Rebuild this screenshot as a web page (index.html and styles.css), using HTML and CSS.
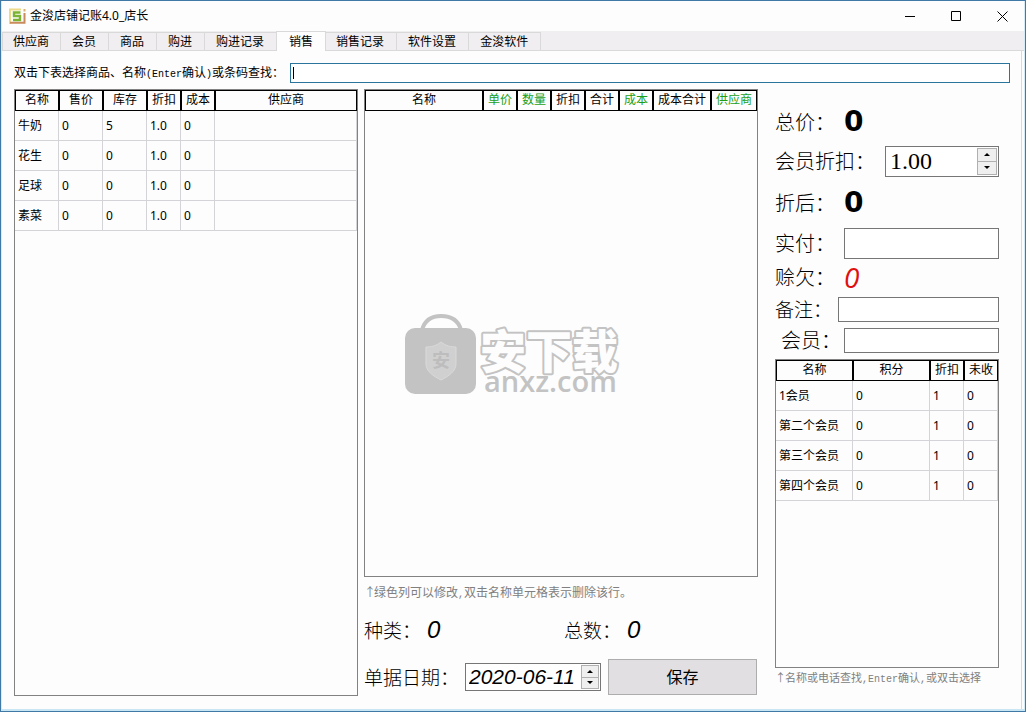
FILE: index.html
```html
<!DOCTYPE html>
<html lang="zh-CN">
<head>
<meta charset="utf-8">
<title>金浚店铺记账4.0_店长</title>
<link rel="stylesheet" href="styles.css">
</head>
<body>
<div class="window">
  <header class="titlebar">
    <svg class="app-icon" viewBox="0 0 17 17" aria-hidden="true">
      <path d="M1 16V1.5h11" fill="none" stroke="#ecd98a" stroke-width="2"/>
      <path d="M1 14.8h14.5V5" fill="none" stroke="#c98a5c" stroke-width="2"/>
      <path d="M15.500 1v2.500" stroke="#d9b070" stroke-width="2"/>
      <path d="M11.500 4.500H5v3.500h6v4H4" fill="none" stroke="#7cb332" stroke-width="2.400"/>
    </svg>
    <h1 class="title">金浚店铺记账4.0_店长</h1>
    <div class="window-buttons">
      <button type="button" aria-label="最小化"><svg viewBox="0 0 11 11"><path d="M0 5.500h10"/></svg></button>
      <button type="button" aria-label="最大化"><svg viewBox="0 0 11 11"><path d="M.5.5h9v9h-9z"/></svg></button>
      <button type="button" aria-label="关闭"><svg viewBox="0 0 11 11"><path d="M.5.5l10 10M10.500.5l-10 10"/></svg></button>
    </div>
  </header>

  <nav class="tabs">
    <button type="button" class="tab">供应商</button>
    <button type="button" class="tab">会员</button>
    <button type="button" class="tab">商品</button>
    <button type="button" class="tab">购进</button>
    <button type="button" class="tab">购进记录</button>
    <button type="button" class="tab tab-active">销售</button>
    <button type="button" class="tab">销售记录</button>
    <button type="button" class="tab">软件设置</button>
    <button type="button" class="tab">金浚软件</button>
  </nav>

  <main class="pane">
    <div class="search">
      <label for="search">双击下表选择商品、名称<span class="latin">(Enter</span>确认<span class="latin">)</span>或条码查找：</label>
      <div class="search-box"><input id="search" type="text"></div>
    </div>

    <div class="columns">
      <section class="grid-box">
        <table>
          <colgroup><col class="w44"><col class="w44"><col class="w44"><col class="w34"><col class="w34"><col></colgroup>
          <thead><tr><th>名称</th><th>售价</th><th>库存</th><th>折扣</th><th>成本</th><th>供应商</th></tr></thead>
          <tbody>
            <tr><td>牛奶</td><td>0</td><td>5</td><td>1.0</td><td>0</td><td></td></tr>
            <tr><td>花生</td><td>0</td><td>0</td><td>1.0</td><td>0</td><td></td></tr>
            <tr><td>足球</td><td>0</td><td>0</td><td>1.0</td><td>0</td><td></td></tr>
            <tr><td>素菜</td><td>0</td><td>0</td><td>1.0</td><td>0</td><td></td></tr>
          </tbody>
        </table>
      </section>

      <section class="order">
        <div class="grid-box">
          <table>
            <colgroup><col><col class="w34"><col class="w34"><col class="w34"><col class="w34"><col class="w34"><col class="w58"><col class="w46"></colgroup>
            <thead><tr><th>名称</th><th class="editable">单价</th><th class="editable">数量</th><th>折扣</th><th>合计</th><th class="editable">成本</th><th>成本合计</th><th class="editable">供应商</th></tr></thead>
          </table>
          <svg class="watermark" viewBox="0 0 220 92" aria-hidden="true">
            <path d="M17 16C20 5 27 2 36 2s17 3 20 14" fill="none" stroke="#c3c3c3" stroke-width="4"/>
            <rect x="0" y="14" width="71" height="66" rx="10" fill="#c3c3c3"/>
            <path d="M36 28c5 4 10 5 15 5v17c0 7-7 12-15 16-8-4-15-9-15-16V33c5 0 10-1 15-5z" fill="#d0d0d0" stroke="#dadada"/>
            <text class="mark-seal" x="36" y="53" text-anchor="middle">安</text>
            <text class="mark-name" x="75" y="54">安下载</text>
            <text class="mark-site" x="79" y="78">anxz.com</text>
          </svg>
        </div>
        <p class="note"><span class="arrow">↑</span>绿色列可以修改<span class="latin">,</span>双击名称单元格表示删除该行。</p>
        <div class="counts">
          <div>种类：<output>0</output></div>
          <div>总数：<output>0</output></div>
        </div>
        <div class="submit">
          <label for="date">单据日期：</label>
          <div class="spin spin-date">
            <input id="date" type="text" value="2020-06-11">
            <div class="steps">
              <button type="button" class="up" aria-label="增加"></button>
              <button type="button" class="down" aria-label="减少"></button>
            </div>
          </div>
          <button type="button" class="save">保存</button>
        </div>
      </section>

      <section class="checkout">
        <div class="row row-total"><span>总价：</span><output class="sum">0</output></div>
        <div class="row row-field">
          <label for="discount">会员折扣：</label>
          <div class="spin spin-discount">
            <input id="discount" type="text" value="1.00">
            <div class="steps">
              <button type="button" class="up" aria-label="增加"></button>
              <button type="button" class="down" aria-label="减少"></button>
            </div>
          </div>
        </div>
        <div class="row row-net"><span>折后：</span><output class="sum">0</output></div>
        <div class="row row-field"><label for="paid">实付：</label><input id="paid" class="field field-tall" type="text"></div>
        <div class="row row-debt"><span>赊欠：</span><output class="debt">0</output></div>
        <div class="row row-remark"><label for="remark">备注：</label><input id="remark" class="field" type="text"></div>
        <div class="row row-member"><label for="member">会员：</label><input id="member" class="field" type="text"></div>
        <div class="grid-box">
          <table>
            <colgroup><col><col><col class="w34"><col class="w34"></colgroup>
            <thead><tr><th>名称</th><th>积分</th><th>折扣</th><th>未收</th></tr></thead>
            <tbody>
              <tr><td>1会员</td><td>0</td><td>1</td><td>0</td></tr>
              <tr><td>第二个会员</td><td>0</td><td>1</td><td>0</td></tr>
              <tr><td>第三个会员</td><td>0</td><td>1</td><td>0</td></tr>
              <tr><td>第四个会员</td><td>0</td><td>1</td><td>0</td></tr>
            </tbody>
          </table>
        </div>
        <p class="note note-small"><span class="arrow">↑</span>名称或电话查找<span class="latin">,Enter</span>确认<span class="latin">,</span>或双击选择</p>
      </section>
    </div>
  </main>
</div>
</body>
</html>
```
FILE: styles.css
```css
* { box-sizing: border-box; }

body {
  margin: 0;
  font: 12px/16px "Noto Sans", "Noto Sans CJK SC", sans-serif;
  color: #000;
}

button, input { font: inherit; color: inherit; margin: 0; }
p, h1 { margin: 0; }

.window {
  display: flex;
  flex-direction: column;
  min-height: 100vh;
  background: #fdfdfd;
  border: 1px solid #4179a6;
  box-shadow: inset 0 -2px #c9e6f5, inset 1px 0 #d5ecf7, inset -1px 0 #d5ecf7;
}

/* Title bar */
.titlebar {
  display: flex;
  align-items: center;
  height: 30px;
  padding-left: 8px;
}
.app-icon { width: 17px; height: 17px; margin-right: 4px; }
.title { flex: 1; font-size: 12px; font-weight: 400; }
.window-buttons { display: flex; }
.window-buttons button {
  width: 46px;
  height: 30px;
  padding: 0;
  border: 0;
  background: none;
}
.window-buttons svg {
  display: block;
  width: 11px;
  height: 11px;
  margin: 0 auto;
  fill: none;
  stroke: #000;
}

/* Tabs */
.tabs {
  display: flex;
  align-items: flex-end;
  height: 20px;
  margin: 0 1px;
  background: #f0eef1;
  border-bottom: 1px solid #d9d9d9;
}
.tab {
  height: 18px;
  padding: 1px 12px 0 11px;
  border: 1px solid #d9d9d9;
  border-width: 1px 1px 0 0;
  background: #f0eef1;
  line-height: 16px;
  white-space: nowrap;
}
.tab:first-child { padding: 1px 11px 0 10px; border-left-width: 1px; }
.tab-active {
  position: relative;
  height: 20px;
  padding: 0 12px;
  margin: 0 -1px -1px;
  border-left-width: 1px;
  background: #fdfdfd;
}

/* Page body */
.pane {
  flex: 1;
  display: flex;
  flex-direction: column;
  margin: 0 3px 2px 2px;
  padding: 12px 11px 13px 11px;
  border-right: 1px solid #d9d9d9;
}
.search { display: flex; align-items: center; gap: 6px; }
.search label { white-space: nowrap; }
.latin { font: 10px/12px "Liberation Mono", monospace; }
.search-box { position: relative; flex: 1; display: flex; }
.search-box::after {
  content: "";
  position: absolute;
  left: 3px;
  top: 4px;
  width: 1px;
  height: 12px;
  background: #000;
}
.search-box input {
  width: 100%;
  height: 20px;
  padding: 0 3px;
  border: 1px solid #2b749b;
  background: #fff;
  outline: 0;
}

.columns {
  flex: 1;
  display: grid;
  grid-template-columns: minmax(0, 344fr) minmax(0, 394fr) minmax(0, 235fr);
  gap: 6px;
  margin: 6px 11px 0 0;
}

/* Tables */
.grid-box {
  position: relative;
  border: 1px solid #828282;
  background: #fdfdfd;
}
table {
  width: 100%;
  table-layout: fixed;
  border-collapse: separate;
  border-spacing: 0;
}
.w34 { width: 34px; }
.w44 { width: 44px; }
.w46 { width: 46px; }
.w58 { width: 58px; }
th {
  height: 21px;
  padding: 0 0 1px;
  border: 1px solid #000;
  font-weight: 400;
  white-space: nowrap;
}
td {
  height: 30px;
  padding: 0 0 0 3px;
  border: 1px solid #d4d4d8;
  border-width: 0 1px 1px 0;
  white-space: nowrap;
}
.editable { color: #18a018; }

/* Order column */
.order { display: flex; flex-direction: column; }
.order .grid-box { flex: 1; }
.watermark {
  position: absolute;
  left: 40px;
  top: 224px;
  width: 220px;
  height: 92px;
}
.mark-seal { font: 700 18px "Noto Sans CJK SC", sans-serif; fill: #bdbdbd; }
.mark-name {
  font: 900 46px "Noto Sans CJK SC", sans-serif;
  fill: #fdfdfd;
  stroke: #c3c3c3;
  stroke-width: 4px;
  stroke-linejoin: round;
  paint-order: stroke;
}
.mark-site { font: 600 29px "Open Sans", sans-serif; fill: #c3c3c3; }
.note { margin-top: 8px; color: #808080; white-space: nowrap; }
.arrow {
  display: inline-block;
  width: 10px;
  text-align: center;
}
.counts {
  display: grid;
  grid-template-columns: 1fr 1fr;
  column-gap: 6px;
  margin-top: 15px;
  font: 300 19px/28px "Noto Sans CJK SC", sans-serif;
}
.counts div { display: flex; gap: 6px; }
.counts output { font: italic 24px/28px "Liberation Sans", sans-serif; }
.submit { display: flex; align-items: center; margin-top: 14px; height: 38px; }
.submit label {
  width: 101px;
  font: 300 19px/28px "Noto Sans CJK SC", sans-serif;
  white-space: nowrap;
}
.save {
  flex: 1;
  height: 36px;
  margin: 0 1px 0 7px;
  border: 1px solid #adadad;
  background: #e1dfe2;
  font-size: 16px;
}

/* Spin boxes */
.spin {
  display: flex;
  min-width: 0;
  padding: 1px;
  border: 1px solid #767676;
  background: #fff;
}
.spin input {
  flex: 1;
  width: 100%;
  min-width: 0;
  padding: 0 0 0 3px;
  border: 0;
  background: none;
  outline: 0;
}
.spin-date { width: 136px; height: 28px; }
.spin-date input { padding-left: 2px; font: italic 21px/24px "Liberation Sans", sans-serif; }
.spin-discount { flex: 1; height: 31px; margin-left: 10px; }
.spin-discount input { font: 24px/27px "Liberation Serif", serif; }
.steps { flex: none; display: flex; flex-direction: column; width: 20px; }
.spin-date .steps { width: 18px; }
.steps button {
  flex: 1;
  display: flex;
  align-items: center;
  justify-content: center;
  padding: 0;
  border: 1px solid #b0b0b0;
  background: #f0eff0;
}
.steps button + button { border-top: 0; }
.steps button::before {
  content: "";
  border: 3px solid transparent;
}
.steps .up::before { border-top: 0; border-bottom-color: #000; }
.steps .down::before { border-bottom: 0; border-top-color: #000; }

/* Checkout column */
.checkout { display: flex; flex-direction: column; padding: 11px 0 0 11px; }
.row {
  display: flex;
  align-items: center;
  font: 300 20px/28px "Noto Sans CJK SC", sans-serif;
  white-space: nowrap;
}
.row > :first-child { flex: none; min-width: 69px; }
.row-total { height: 43px; }
.row-field { height: 36px; }
.row-net { height: 46px; padding-top: 2px; }
.row-debt { height: 32px; }
.row-remark { height: 32px; font-size: 19px; }
.row-member { height: 30px; padding-left: 6px; }
.row-remark > :first-child, .row-member > :first-child { min-width: 63px; }
.sum { font: 700 28px/32px "DejaVu Sans", sans-serif; }
.debt { font: italic 28px/32px "Open Sans", sans-serif; color: #e01010; }
.field {
  flex: 1;
  min-width: 0;
  height: 25px;
  padding: 0 3px;
  border: 1px solid #767676;
  background: #fff;
  font-size: 16px;
}
.field-tall { height: 31px; }
.checkout .grid-box { flex: 1; margin-top: 4px; }
.note-small { margin-top: 2px; height: 26px; font-size: 11px; }
```
